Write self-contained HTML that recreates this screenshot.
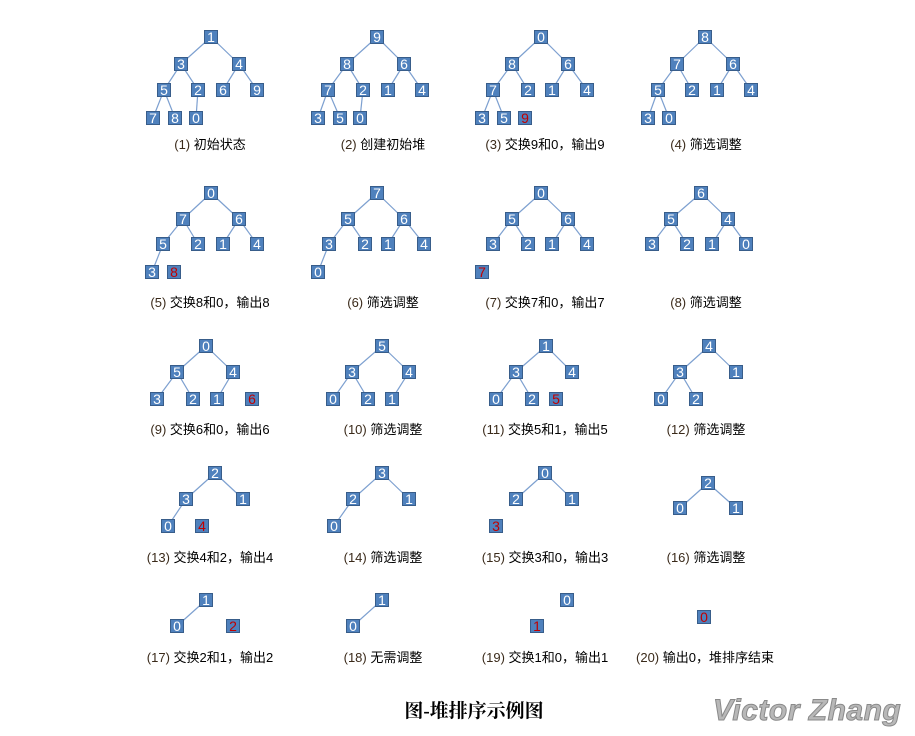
<!DOCTYPE html>
<html><head><meta charset="utf-8">
<style>
body{margin:0;background:#fff;width:915px;height:736px;position:relative;overflow:hidden;font-family:"Liberation Sans","Noto Sans CJK SC",sans-serif}
.n{position:absolute;width:14px;height:14px;box-sizing:border-box;background:#4f81bd;border:1px solid #385d8a;color:#fff;font-size:14px;line-height:12px;text-align:center}
.r{color:#c00000}
.c{position:absolute;width:200px;margin-left:-100px;text-align:center;font-size:13px;line-height:16px;color:#000;font-family:"Liberation Sans","Microsoft YaHei","Noto Sans CJK SC",sans-serif}
.c b{font-weight:normal;color:#3a2a1a}
svg{position:absolute;left:0;top:0}
line{stroke:#7da0d0;stroke-width:1.2}
</style></head><body>
<svg width="915" height="736">
<line x1="211" y1="37" x2="181" y2="64"/><line x1="211" y1="37" x2="239" y2="64"/>
<line x1="181" y1="64" x2="164" y2="90"/><line x1="181" y1="64" x2="198" y2="90"/>
<line x1="239" y1="64" x2="223" y2="90"/><line x1="239" y1="64" x2="257" y2="90"/>
<line x1="164" y1="90" x2="153" y2="118"/><line x1="164" y1="90" x2="175" y2="118"/>
<line x1="198" y1="90" x2="196" y2="118"/>
<line x1="377" y1="37" x2="347" y2="64"/><line x1="377" y1="37" x2="404" y2="64"/>
<line x1="347" y1="64" x2="328" y2="90"/><line x1="347" y1="64" x2="363" y2="90"/>
<line x1="404" y1="64" x2="388" y2="90"/><line x1="404" y1="64" x2="422" y2="90"/>
<line x1="328" y1="90" x2="318" y2="118"/><line x1="328" y1="90" x2="340" y2="118"/>
<line x1="363" y1="90" x2="360" y2="118"/>
<line x1="541" y1="37" x2="512" y2="64"/><line x1="541" y1="37" x2="568" y2="64"/>
<line x1="512" y1="64" x2="493" y2="90"/><line x1="512" y1="64" x2="528" y2="90"/>
<line x1="568" y1="64" x2="552" y2="90"/><line x1="568" y1="64" x2="587" y2="90"/>
<line x1="493" y1="90" x2="482" y2="118"/><line x1="493" y1="90" x2="504" y2="118"/>
<line x1="705" y1="37" x2="677" y2="64"/><line x1="705" y1="37" x2="733" y2="64"/>
<line x1="677" y1="64" x2="658" y2="90"/><line x1="677" y1="64" x2="692" y2="90"/>
<line x1="733" y1="64" x2="717" y2="90"/><line x1="733" y1="64" x2="751" y2="90"/>
<line x1="658" y1="90" x2="648" y2="118"/><line x1="658" y1="90" x2="669" y2="118"/>
<line x1="211" y1="193" x2="183" y2="219"/><line x1="211" y1="193" x2="239" y2="219"/>
<line x1="183" y1="219" x2="163" y2="244"/><line x1="183" y1="219" x2="198" y2="244"/>
<line x1="239" y1="219" x2="223" y2="244"/><line x1="239" y1="219" x2="257" y2="244"/>
<line x1="163" y1="244" x2="152" y2="272"/>
<line x1="377" y1="193" x2="348" y2="219"/><line x1="377" y1="193" x2="404" y2="219"/>
<line x1="348" y1="219" x2="329" y2="244"/><line x1="348" y1="219" x2="365" y2="244"/>
<line x1="404" y1="219" x2="388" y2="244"/><line x1="404" y1="219" x2="424" y2="244"/>
<line x1="329" y1="244" x2="318" y2="272"/>
<line x1="541" y1="193" x2="512" y2="219"/><line x1="541" y1="193" x2="568" y2="219"/>
<line x1="512" y1="219" x2="493" y2="244"/><line x1="512" y1="219" x2="528" y2="244"/>
<line x1="568" y1="219" x2="552" y2="244"/><line x1="568" y1="219" x2="587" y2="244"/>
<line x1="701" y1="193" x2="671" y2="219"/><line x1="701" y1="193" x2="728" y2="219"/>
<line x1="671" y1="219" x2="652" y2="244"/><line x1="671" y1="219" x2="687" y2="244"/>
<line x1="728" y1="219" x2="712" y2="244"/><line x1="728" y1="219" x2="746" y2="244"/>
<line x1="206" y1="346" x2="177" y2="372"/><line x1="206" y1="346" x2="233" y2="372"/>
<line x1="177" y1="372" x2="157" y2="399"/><line x1="177" y1="372" x2="193" y2="399"/>
<line x1="233" y1="372" x2="217" y2="399"/>
<line x1="382" y1="346" x2="352" y2="372"/><line x1="382" y1="346" x2="409" y2="372"/>
<line x1="352" y1="372" x2="333" y2="399"/><line x1="352" y1="372" x2="368" y2="399"/>
<line x1="409" y1="372" x2="392" y2="399"/>
<line x1="546" y1="346" x2="516" y2="372"/><line x1="546" y1="346" x2="572" y2="372"/>
<line x1="516" y1="372" x2="496" y2="399"/><line x1="516" y1="372" x2="532" y2="399"/>
<line x1="709" y1="346" x2="680" y2="372"/><line x1="709" y1="346" x2="736" y2="372"/>
<line x1="680" y1="372" x2="661" y2="399"/><line x1="680" y1="372" x2="696" y2="399"/>
<line x1="215" y1="473" x2="186" y2="499"/><line x1="215" y1="473" x2="243" y2="499"/>
<line x1="186" y1="499" x2="168" y2="526"/>
<line x1="382" y1="473" x2="353" y2="499"/><line x1="382" y1="473" x2="409" y2="499"/>
<line x1="353" y1="499" x2="334" y2="526"/>
<line x1="545" y1="473" x2="516" y2="499"/><line x1="545" y1="473" x2="572" y2="499"/>
<line x1="708" y1="483" x2="680" y2="508"/><line x1="708" y1="483" x2="736" y2="508"/>
<line x1="206" y1="600" x2="177" y2="626"/>
<line x1="382" y1="600" x2="353" y2="626"/>
</svg>

<div class="n" style="left:204px;top:30px">1</div>
<div class="n" style="left:174px;top:57px">3</div>
<div class="n" style="left:232px;top:57px">4</div>
<div class="n" style="left:157px;top:83px">5</div>
<div class="n" style="left:191px;top:83px">2</div>
<div class="n" style="left:216px;top:83px">6</div>
<div class="n" style="left:250px;top:83px">9</div>
<div class="n" style="left:146px;top:111px">7</div>
<div class="n" style="left:168px;top:111px">8</div>
<div class="n" style="left:189px;top:111px">0</div>
<div class="n" style="left:370px;top:30px">9</div>
<div class="n" style="left:340px;top:57px">8</div>
<div class="n" style="left:397px;top:57px">6</div>
<div class="n" style="left:321px;top:83px">7</div>
<div class="n" style="left:356px;top:83px">2</div>
<div class="n" style="left:381px;top:83px">1</div>
<div class="n" style="left:415px;top:83px">4</div>
<div class="n" style="left:311px;top:111px">3</div>
<div class="n" style="left:333px;top:111px">5</div>
<div class="n" style="left:353px;top:111px">0</div>
<div class="n" style="left:534px;top:30px">0</div>
<div class="n" style="left:505px;top:57px">8</div>
<div class="n" style="left:561px;top:57px">6</div>
<div class="n" style="left:486px;top:83px">7</div>
<div class="n" style="left:521px;top:83px">2</div>
<div class="n" style="left:545px;top:83px">1</div>
<div class="n" style="left:580px;top:83px">4</div>
<div class="n" style="left:475px;top:111px">3</div>
<div class="n" style="left:497px;top:111px">5</div>
<div class="n r" style="left:518px;top:111px">9</div>
<div class="n" style="left:698px;top:30px">8</div>
<div class="n" style="left:670px;top:57px">7</div>
<div class="n" style="left:726px;top:57px">6</div>
<div class="n" style="left:651px;top:83px">5</div>
<div class="n" style="left:685px;top:83px">2</div>
<div class="n" style="left:710px;top:83px">1</div>
<div class="n" style="left:744px;top:83px">4</div>
<div class="n" style="left:641px;top:111px">3</div>
<div class="n" style="left:662px;top:111px">0</div>
<div class="n" style="left:204px;top:186px">0</div>
<div class="n" style="left:176px;top:212px">7</div>
<div class="n" style="left:232px;top:212px">6</div>
<div class="n" style="left:156px;top:237px">5</div>
<div class="n" style="left:191px;top:237px">2</div>
<div class="n" style="left:216px;top:237px">1</div>
<div class="n" style="left:250px;top:237px">4</div>
<div class="n" style="left:145px;top:265px">3</div>
<div class="n r" style="left:167px;top:265px">8</div>
<div class="n" style="left:370px;top:186px">7</div>
<div class="n" style="left:341px;top:212px">5</div>
<div class="n" style="left:397px;top:212px">6</div>
<div class="n" style="left:322px;top:237px">3</div>
<div class="n" style="left:358px;top:237px">2</div>
<div class="n" style="left:381px;top:237px">1</div>
<div class="n" style="left:417px;top:237px">4</div>
<div class="n" style="left:311px;top:265px">0</div>
<div class="n" style="left:534px;top:186px">0</div>
<div class="n" style="left:505px;top:212px">5</div>
<div class="n" style="left:561px;top:212px">6</div>
<div class="n" style="left:486px;top:237px">3</div>
<div class="n" style="left:521px;top:237px">2</div>
<div class="n" style="left:545px;top:237px">1</div>
<div class="n" style="left:580px;top:237px">4</div>
<div class="n r" style="left:475px;top:265px">7</div>
<div class="n" style="left:694px;top:186px">6</div>
<div class="n" style="left:664px;top:212px">5</div>
<div class="n" style="left:721px;top:212px">4</div>
<div class="n" style="left:645px;top:237px">3</div>
<div class="n" style="left:680px;top:237px">2</div>
<div class="n" style="left:705px;top:237px">1</div>
<div class="n" style="left:739px;top:237px">0</div>
<div class="n" style="left:199px;top:339px">0</div>
<div class="n" style="left:170px;top:365px">5</div>
<div class="n" style="left:226px;top:365px">4</div>
<div class="n" style="left:150px;top:392px">3</div>
<div class="n" style="left:186px;top:392px">2</div>
<div class="n" style="left:210px;top:392px">1</div>
<div class="n r" style="left:245px;top:392px">6</div>
<div class="n" style="left:375px;top:339px">5</div>
<div class="n" style="left:345px;top:365px">3</div>
<div class="n" style="left:402px;top:365px">4</div>
<div class="n" style="left:326px;top:392px">0</div>
<div class="n" style="left:361px;top:392px">2</div>
<div class="n" style="left:385px;top:392px">1</div>
<div class="n" style="left:539px;top:339px">1</div>
<div class="n" style="left:509px;top:365px">3</div>
<div class="n" style="left:565px;top:365px">4</div>
<div class="n" style="left:489px;top:392px">0</div>
<div class="n" style="left:525px;top:392px">2</div>
<div class="n r" style="left:549px;top:392px">5</div>
<div class="n" style="left:702px;top:339px">4</div>
<div class="n" style="left:673px;top:365px">3</div>
<div class="n" style="left:729px;top:365px">1</div>
<div class="n" style="left:654px;top:392px">0</div>
<div class="n" style="left:689px;top:392px">2</div>
<div class="n" style="left:208px;top:466px">2</div>
<div class="n" style="left:179px;top:492px">3</div>
<div class="n" style="left:236px;top:492px">1</div>
<div class="n" style="left:161px;top:519px">0</div>
<div class="n r" style="left:195px;top:519px">4</div>
<div class="n" style="left:375px;top:466px">3</div>
<div class="n" style="left:346px;top:492px">2</div>
<div class="n" style="left:402px;top:492px">1</div>
<div class="n" style="left:327px;top:519px">0</div>
<div class="n" style="left:538px;top:466px">0</div>
<div class="n" style="left:509px;top:492px">2</div>
<div class="n" style="left:565px;top:492px">1</div>
<div class="n r" style="left:489px;top:519px">3</div>
<div class="n" style="left:701px;top:476px">2</div>
<div class="n" style="left:673px;top:501px">0</div>
<div class="n" style="left:729px;top:501px">1</div>
<div class="n" style="left:199px;top:593px">1</div>
<div class="n" style="left:170px;top:619px">0</div>
<div class="n r" style="left:226px;top:619px">2</div>
<div class="n" style="left:375px;top:593px">1</div>
<div class="n" style="left:346px;top:619px">0</div>
<div class="n" style="left:560px;top:593px">0</div>
<div class="n r" style="left:530px;top:619px">1</div>
<div class="n r" style="left:697px;top:610px">0</div>

<div class="c" style="left:210px;top:137px"><b>(1)</b> 初始状态</div>
<div class="c" style="left:383px;top:137px"><b>(2)</b> 创建初始堆</div>
<div class="c" style="left:545px;top:137px"><b>(3)</b> 交换9和0，输出9</div>
<div class="c" style="left:706px;top:137px"><b>(4)</b> 筛选调整</div>
<div class="c" style="left:210px;top:295px"><b>(5)</b> 交换8和0，输出8</div>
<div class="c" style="left:383px;top:295px"><b>(6)</b> 筛选调整</div>
<div class="c" style="left:545px;top:295px"><b>(7)</b> 交换7和0，输出7</div>
<div class="c" style="left:706px;top:295px"><b>(8)</b> 筛选调整</div>
<div class="c" style="left:210px;top:422px"><b>(9)</b> 交换6和0，输出6</div>
<div class="c" style="left:383px;top:422px"><b>(10)</b> 筛选调整</div>
<div class="c" style="left:545px;top:422px"><b>(11)</b> 交换5和1，输出5</div>
<div class="c" style="left:706px;top:422px"><b>(12)</b> 筛选调整</div>
<div class="c" style="left:210px;top:550px"><b>(13)</b> 交换4和2，输出4</div>
<div class="c" style="left:383px;top:550px"><b>(14)</b> 筛选调整</div>
<div class="c" style="left:545px;top:550px"><b>(15)</b> 交换3和0，输出3</div>
<div class="c" style="left:706px;top:550px"><b>(16)</b> 筛选调整</div>
<div class="c" style="left:210px;top:650px"><b>(17)</b> 交换2和1，输出2</div>
<div class="c" style="left:383px;top:650px"><b>(18)</b> 无需调整</div>
<div class="c" style="left:545px;top:650px"><b>(19)</b> 交换1和0，输出1</div>
<div class="c" style="left:705px;top:650px"><b>(20)</b> 输出0，堆排序结束</div>

<div style="position:absolute;left:374px;top:700px;width:200px;text-align:center;font-family:'Liberation Serif','Noto Serif CJK SC',serif;font-weight:bold;font-size:19px;line-height:24px;color:#000">图-堆排序示例图</div>
<div style="position:absolute;left:713px;top:693px;font-family:'Liberation Sans',sans-serif;font-style:italic;font-weight:bold;font-size:30px;line-height:36px;color:#b8b8b8;-webkit-text-stroke:1px #8a8a8a;letter-spacing:0.5px">Victor Zhang</div>
</body></html>
